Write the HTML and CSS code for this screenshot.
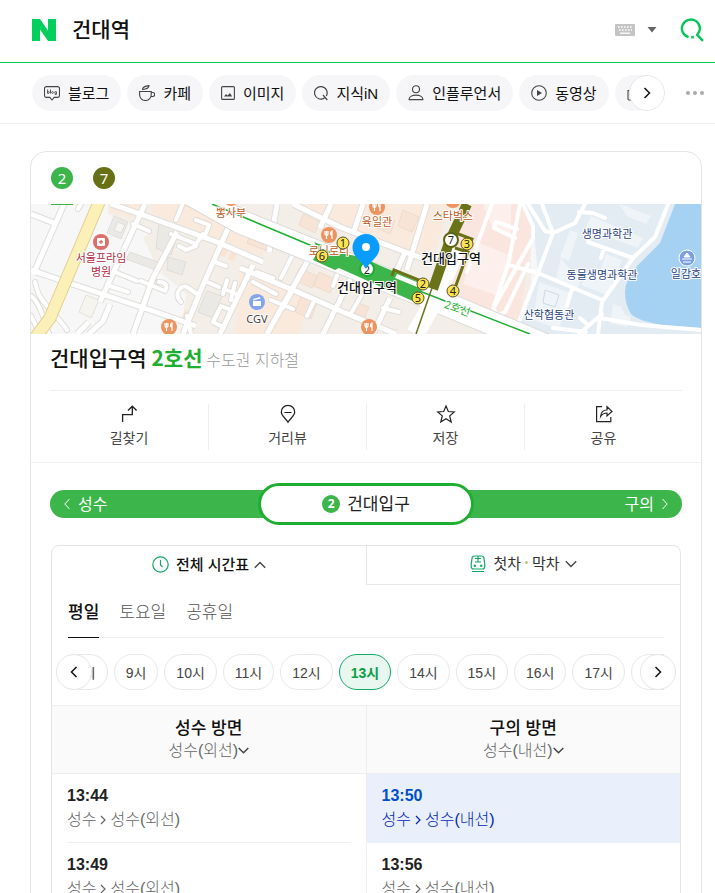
FILE: index.html
```html
<!DOCTYPE html>
<html lang="ko">
<head>
    <meta charset="UTF-8">
    <meta name="viewport" content="width=device-width, initial-scale=1.0">
    <title>건대역</title>
    <link rel="stylesheet" href="styles.css">
</head>
<body>
    <header class="header">
        <a class="logo" href="#" aria-label="홈">
            <svg width="24" height="22" viewBox="0 0 24 22"><path d="M0 0h8l8 11.500V0h8v22h-8L8 10.500V22H0z" fill="#03cf5d"/></svg>
        </a>
        <input class="search-input" type="text" value="건대역" aria-label="검색어">
        <button class="keyboard" aria-label="키보드">
            <svg width="20" height="12" viewBox="0 0 20 12">
                <rect width="20" height="12" rx="1" fill="#c4c4c4"/>
                <path d="M3 3h15M4 6h13" stroke="#fff" stroke-width="1.600" stroke-dasharray="1.600 1.400"/>
                <path d="M5 9.200h10" stroke="#fff" stroke-width="1.300"/>
            </svg>
        </button>
        <button class="history" aria-label="최근 검색어">
            <svg width="10" height="6" viewBox="0 0 10 6"><path d="M.5 0h9L5 5.500z" fill="#666"/></svg>
        </button>
        <button class="search" aria-label="검색">
            <svg width="24" height="24" viewBox="0 0 24 24" fill="none" stroke="#03c75a" stroke-width="2.400">
                <path d="M8.600 19.200A9 9 0 1 1 17.200 16.900L23 22.800"/>
                <path d="M11.200 19.200h2.600" stroke-width="2.600"/>
            </svg>
        </button>
    </header>

    <nav class="chips-bar">
        <div class="chips">
            <a class="chip" href="#">
                <svg width="16" height="16" viewBox="0 0 16 16" fill="none" stroke="#444" stroke-width="1.100">
                    <path d="M2.500 1.600h11a2 2 0 0 1 2 2v6.800a2 2 0 0 1-2 2h-3.300L8 15l-2.200-2.600H2.500a2 2 0 0 1-2-2V3.600a2 2 0 0 1 2-2z"/>
                    <path d="M3.600 4.500v4M6.500 4.500v4" stroke-width=".9"/>
                    <circle cx="4.500" cy="7.500" r=".9" stroke-width=".8"/><circle cx="8.500" cy="7.500" r=".9" stroke-width=".8"/>
                    <path d="M12.400 6.500v3h-1.700" stroke-width=".8"/><circle cx="11.500" cy="7.500" r=".9" stroke-width=".8"/>
                </svg>블로그</a>
            <a class="chip" href="#">
                <svg width="16" height="16" viewBox="0 0 16 16" fill="none" stroke="#444" stroke-width="1.100">
                    <path d="M.6 6.500h11.600v3.200a5.800 5.800 0 0 1-11.600 0zM12.200 7.500h1.500a1.700 1.700 0 0 1 0 4h-1.900M3.500 4.500C3.500 1.500 6 1 10 .6c0 2.600-2.600 3.700-6.500 3.900z"/>
                </svg>카페</a>
            <a class="chip" href="#">
                <svg width="14" height="16" viewBox="0 0 14 16" fill="none" stroke="#444" stroke-width="1.100">
                    <rect x=".6" y="1.600" width="12.800" height="12.800" rx="1"/>
                    <path d="M3 11.500l2-2.500 1.500 1.600L9 8l2.200 3.500z" fill="#444" stroke="none"/>
                </svg>이미지</a>
            <a class="chip" href="#">
                <svg width="14" height="16" viewBox="0 0 14 16" fill="none" stroke="#444" stroke-width="1.200">
                    <path d="M10.500 13A6.300 6.300 0 1 1 12.300 11M9 10l4.300 5"/>
                </svg>지식iN</a>
            <a class="chip" href="#">
                <svg width="16" height="16" viewBox="0 0 16 16" fill="none" stroke="#444" stroke-width="1.100">
                    <circle cx="8" cy="4.200" r="3.500"/>
                    <path d="M1 14.600c0-6 14-6 14 0z" stroke-linejoin="round"/>
                </svg>인플루언서</a>
            <a class="chip" href="#">
                <svg width="16" height="16" viewBox="0 0 16 16" fill="none" stroke="#444" stroke-width="1.100">
                    <circle cx="8" cy="8" r="7.300"/><path d="M6 5v6l5-3z" fill="#444" stroke="none"/>
                </svg>동영상</a>
            <a class="chip" href="#" aria-label="쇼핑">
                <svg width="16" height="16" viewBox="0 0 16 16" fill="none" stroke="#444" stroke-width="1.100">
                    <path d="M1 5.500h14l-1 8.500a1 1 0 0 1-1 1H2a1 1 0 0 1-1-1zM4 8V4a4 4 0 0 1 8 0v4"/>
                </svg>
            </a>
            <button class="chips-next" aria-label="다음">
                <svg width="8" height="12" viewBox="0 0 8 12" fill="none" stroke="#111" stroke-width="1.500"><path d="M1.500 1l5 5-5 5"/></svg>
            </button>
        </div>
        <button class="more" aria-label="더보기">
            <svg width="18" height="4" viewBox="0 0 18 4" fill="#aaa"><circle cx="2" cy="2" r="2"/><circle cx="9" cy="2" r="2"/><circle cx="16" cy="2" r="2"/></svg>
        </button>
    </nav>

    <main class="card">
        <div class="line-tabs">
            <a class="line-tab on" href="#"><span class="badge line2">2</span></a>
            <a class="line-tab" href="#"><span class="badge line7">7</span></a>
        </div>

        <svg class="map" viewBox="0 0 670 130" preserveAspectRatio="xMidYMid slice">
            <defs>
                <g id="roads" fill="none" stroke-linejoin="round">
                    <path class="road" d="M0 10L23 19M33 0L2 71M0 66L65 88L122 107L165 122M114 0L89 54L69 98M80 0L112 11L186 38L232 58M146 28L122 74L102 130M202 13L169 88L152 130M222 61L189 130M79 100L72 117L58 130M58 118L46 130"/>
                    <path class="road" d="M262 0L309 23L369 46L396 56M209 64L262 86L319 111L365 130M279 53L236 130M322 70L292 130M359 94L342 130M300 0L289 24M332 0L322 30M396 0L376 66M375 46L366 66M246 0L238 48"/>
                    <path class="road lane" d="M50 0L47 5M102 20L118 27M4 78C8 100 22 105 36 126M0 92C8 98 12 112 18 130M0 112L9 130M84 68L106 77M76 81L97 88M110 77L134 87C138 79 132 78 128 78M165 16L178 21L173 34M165 42L155 46L148 42M140 30L165 40L172 30M184 58L195 62M176 78L188 83M160 130L156 112M150 98C142 90 150 80 156 83L166 90M196 76L192 90M204 79L200 96M193 85L208 91M190 122L182 118L190 102L200 106L192 124M226 68L242 74M222 78L245 90M250 74L262 50M240 96L262 105M262 86L252 104M212 12L236 22M302 82L309 64M276 112L284 95M352 104L368 108M330 92L319 111M145 16L154 -6"/>
                </g>
                <g id="food">
                    <circle r="8" fill="#ee9460"/>
                    <path d="M-4-4v3a1.500 1.500 0 0 0 3 0v-3M-2.500-4v8M3 4v-8c-2 1-2 4 0 4" fill="none" stroke="#fff" stroke-width="1.200"/>
                </g>
            </defs>
            <rect width="670" height="130" fill="#f7f7f7"/>
            <path d="M77 0H500V130H150L155 90L128 67L112 34L120 27L77 10z" fill="#f3eee8"/>
            <path d="M80 0H112L106 14L78 8zM120 0H180L232 24V52L186 34L122 10zM262 0H420L400 56L330 28zM209 64L280 96L268 130H205z" fill="#fae9dd"/>
            <path d="M120 72L130 76L127 80L118 76zM191 44l6 2-3 7-6-2zM200 48l6 2-3 7-6-2zM154 106l8 3-6 14-8-3z" fill="#fbe3d2"/>
            <path d="M440 0H494L502 22L487 130L399 90L420 40z" fill="#fae5df"/>
            <path d="M452 0H480V30L462 26zM446 38L482 53L468 92L432 80z" fill="#fdf0ec"/>
            <g fill="#ebe9e5" stroke="#d9d7d3" stroke-width=".7">
                <path d="M83 12l14 6-7 17-14-6zM128 19l20 8-8 24-15-7zM99 48l28 10-2 8-30-11zM137 53l18 5-4 13-15-5zM176 87l15 5-9 22-15-6z"/>
                <path d="M87 18l7 3-4 8-7-3z" fill="#f6f5f3"/>
            </g>
            <path d="M55 91l13 5-8 18-12-6z" fill="#f6f4ef" stroke="#e5e1d8"/>
            <path d="M220 28l20 9-4 10-20-8zM268 64l18 8-5 12-18-8zM288 68l16 7-5 14-16-7zM270 92l16 7-6 16-16-7zM324 98l14 5-7 16-14-6zM344 8l20 9-5 13-20-9zM272 10l17 8-5 11-16-8zM372 6l16 7-7 15-14-6z" fill="#f7e4d6" stroke="#ead3c3" stroke-width=".6"/>

            <use class="road-edge" href="#roads"/>
            <use class="road-fill" href="#roads"/>
            <path d="M69-4L19 114L4 134" fill="none" stroke="#e3cf93" stroke-width="13"/>
            <path d="M69-4L19 114L4 134" fill="none" stroke="#fcf0b9" stroke-width="11"/>

            <path d="M494 0H670V130H500L487 120L507 69L503 30z" fill="#e3ebf3"/>
            <g fill="#eff4f9">
                <path d="M560 12L612 34L607 44L554 25zM539 26l8 3-9 28-9-4zM575 50l16 6-15 35-26-10 8-15 10 4zM530 54l8 10 14 7-6 15-22-8zM508 78l32 11-12 36-26-9zM582 100l8 3 4 8 6 2-4 10-17-4z"/>
                <path d="M588 0L620 12L615 20L596 12z"/>
            </g>
            <path d="M514 86l14 5-4 12-12-4z" fill="none" stroke="#cddae7"/>
            <path d="M644 0L629 39L607 61Q594 76 594 88T600 110Q607 117 631 121L670 124V0z" fill="#a5d2f3"/>
            <g fill="none" stroke="#fff" stroke-width="4" stroke-linejoin="round" stroke-linecap="round">
                <path d="M492 0L502 22V34L462 105L467 111L474 108L497 60M461 0L444 46L436 68M489 0L477 61L462 105M465 18L486 25M465 18L463 24L484 34"/>
                <path d="M497 0L514 27L522 29L507 69L487 120M511 0L522 29L544 19L554 0M548 8L562 9L574 14M638-2L624 33L602 54L571 98L567 130M557 38L602 54M573 44L570 54M477 61L507 69L571 96M541 85L536 102M569 114L610 121L670 126M571 110L548 130M522 124L555 128M549 114L556 120"/>
            </g>

            <!-- line 2 corridor -->
            <path d="M160-10L210 18L340 70L410 98L520 144" fill="none" stroke="#dcdad7" stroke-width="25"/>
            <path d="M160-10L210 18L340 70L410 98L520 144" fill="none" stroke="#fff" stroke-width="23"/>
            <path d="M425 45L405 94L384 130" fill="none" stroke="#fff" stroke-width="18"/>
            <path d="M181 0L286 44L391 88L499 130" fill="none" stroke="#1eaf32" stroke-width="1.500"/>
            <path d="M283 38L291 41L290 45L330 53L350 62L388 78L392 84L384 98L366 90L308 64L304 66L282 56L288 46z" fill="#3cb54a"/>
            <path d="M366 70L388 79L386 83L364 74z" fill="#fff"/>
            <!-- line 7 -->
            <g fill="none" stroke="#6a7318">
                <path d="M436 0L419 36L402 85" stroke-width="10"/>
                <path d="M401 84L385 130" stroke-width="1.500"/>
                <path d="M422 28L441 35L438 42M424 44L437 48L424 84M361 72L363 66L390 77" stroke-width="3"/>
            </g>

            <use href="#food" x="346" y="3"/>
            <use href="#food" x="422" y="-4"/>
            <use href="#food" x="200" y="-6"/>
            <use href="#food" x="298" y="31"/>
            <use href="#food" x="138" y="123"/>
            <use href="#food" x="338" y="123"/>
            <circle cx="70" cy="38" r="8" fill="#dd6f6a"/>
            <rect x="66" y="34" width="8" height="8" rx="1" fill="#fff"/>
            <path d="M70 36v4M68 38h4" stroke="#dd6f6a" stroke-width="1.300"/>
            <circle cx="226" cy="98" r="8" fill="#83a5f0"/>
            <path d="M222 97h8v5h-8zM222 95l7-2 .5 1.500-7 2z" fill="#fff"/>
            <circle cx="656" cy="54" r="8" fill="#7d9fe8" stroke="#fff"/>
            <path d="M651 55h10M652 58h8M653 53l3-4 3 4z" stroke="#fff" fill="#fff"/>

            <g class="poi food-name">
                <text x="200" y="13">뽕사부</text><text x="346" y="22">육일관</text>
                <text x="422" y="16">스타벅스</text><text x="298" y="51">로니로티</text>
            </g>
            <g class="poi hospital"><text x="70" y="58">서울프라임</text><text x="70" y="72">병원</text></g>
            <text class="poi cinema" x="226" y="119">CGV</text>
            <g class="poi campus">
                <text x="576" y="34">생명과학관</text><text x="571" y="75">동물생명과학관</text>
                <text x="518" y="115">산학협동관</text><text x="655" y="74">일감호</text>
            </g>
            <text class="poi line-name" transform="translate(425 108) rotate(20)">2호선</text>

            <circle cx="336" cy="65" r="7" fill="#fff" stroke="#1eaf32" stroke-width="2"/>
            <text class="exit-no" x="336" y="70">2</text>
            <path d="M335 65C331 57 321.500 53 321.500 43.500a13.500 13.500 0 0 1 27 0C348.500 53 339 57 335 65z" fill="#0a9bff"/>
            <circle cx="335" cy="43" r="4" fill="#fff"/>
            <circle cx="420" cy="36" r="7" fill="#fff" stroke="#5c6410" stroke-width="2"/>
            <text class="exit-no" x="420" y="40">7</text>
            <g class="poi station"><text x="336" y="88">건대입구역</text><text x="420" y="59">건대입구역</text></g>
            <g fill="#fbe44f" stroke="#55502a">
                <circle cx="312" cy="39" r="6"/><circle cx="291" cy="52" r="6"/><circle cx="392" cy="80" r="6"/>
                <circle cx="387" cy="94" r="6"/><circle cx="436" cy="40" r="6"/><circle cx="422" cy="87" r="6"/>
            </g>
            <g class="exit-no">
                <text x="312" y="43">1</text><text x="291" y="56">6</text><text x="392" y="84">2</text>
                <text x="387" y="98">5</text><text x="436" y="44">3</text><text x="422" y="91">4</text>
            </g>
        </svg>

        <h1 class="title">건대입구역 <strong>2호선</strong> <span>수도권 지하철</span></h1>

        <div class="actions">
            <a class="action" href="#">
                <svg width="20" height="20" viewBox="0 0 20 20" fill="none" stroke="#222" stroke-width="1.300"><path d="M3.600 18v-7.300h9.700V3M9 6.500l4.300-4.300 4.300 4.300"/></svg>
                길찾기</a>
            <a class="action" href="#">
                <svg width="20" height="20" viewBox="0 0 20 20" fill="none" stroke="#222" stroke-width="1.200"><path d="M10 18.300C8 14.500 3.300 12 3.300 8a6.700 6.700 0 0 1 13.400 0c0 4-4.700 6.500-6.700 10.300zM6.500 8.500h7"/></svg>
                거리뷰</a>
            <a class="action" href="#">
                <svg width="20" height="20" viewBox="0 0 20 20" fill="none" stroke="#222" stroke-width="1.200"><path d="M10 2l2.300 5.500 6 .5-4.600 3.900L15.200 18 10 14.700 4.800 18l1.500-6.100L1.700 8l6-.5z"/></svg>
                저장</a>
            <a class="action" href="#">
                <svg width="20" height="20" viewBox="0 0 20 20" fill="none" stroke="#222" stroke-width="1.200"><path d="M8 2.600H2.600v15h14.200V13M6.600 12.500C7 8 9.500 6 13 6V2.600l5 4.900-5 4.500V9c-3 0-4.600 1-6.400 3.500z"/></svg>
                공유</a>
        </div>

        <div class="route">
            <a class="route-side" href="#"><svg width="6" height="12" viewBox="0 0 6 12" fill="none" stroke="#fff"><path d="M5.500 1L.8 6l4.700 5"/></svg><span>성수</span></a>
            <div class="route-now"><b class="badge small line2">2</b><span>건대입구</span></div>
            <a class="route-side right" href="#"><span>구의</span><svg width="6" height="12" viewBox="0 0 6 12" fill="none" stroke="#fff"><path d="M.5 1l4.700 5L.5 11"/></svg></a>
        </div>

        <section class="timetable">
            <div class="view-tabs">
                <button class="view-tab on">
                    <svg width="17" height="17" viewBox="0 0 17 17" fill="none" stroke="#12a866" stroke-width="1.200"><circle cx="8.500" cy="8.500" r="7.700"/><path d="M8.500 4v5l2 2"/></svg>
                    <span>전체 시간표</span>
                    <svg class="arrow" width="12" height="8" viewBox="0 0 12 8" fill="none" stroke="#444" stroke-width="1.400"><path d="M.8 6.800L6 1.500l5.200 5.300"/></svg>
                </button>
                <button class="view-tab">
                    <svg width="16" height="18" viewBox="0 0 16 18" fill="none" stroke="#12a866" stroke-width="1.200">
                        <path d="M4.500 1h7a2.500 2.500 0 0 1 2.500 2.500l.8 6v2a2.500 2.500 0 0 1-2.500 2.500H3.700a2.500 2.500 0 0 1-2.500-2.500v-2l.8-6A2.500 2.500 0 0 1 4.500 1zM8 1v6M5 7h6M5 3.500h6M2 16.500h12"/>
                        <circle cx="4.800" cy="10.800" r=".6" fill="#12a866"/><circle cx="11.200" cy="10.800" r=".6" fill="#12a866"/>
                    </svg>
                    <span>첫차<i class="dot"></i>막차</span>
                    <svg class="arrow" width="12" height="8" viewBox="0 0 12 8" fill="none" stroke="#444" stroke-width="1.400"><path d="M.8 1.200L6 6.500l5.200-5.300"/></svg>
                </button>
            </div>
            <div class="days">
                <button class="day on">평일</button>
                <button class="day">토요일</button>
                <button class="day">공휴일</button>
            </div>
            <div class="hours">
                <div class="hours-list">
                    <button class="hour">8시</button>
                    <button class="hour">9시</button>
                    <button class="hour">10시</button>
                    <button class="hour">11시</button>
                    <button class="hour">12시</button>
                    <button class="hour on">13시</button>
                    <button class="hour">14시</button>
                    <button class="hour">15시</button>
                    <button class="hour">16시</button>
                    <button class="hour">17시</button>
                    <button class="hour" aria-label="18시"></button>
                </div>
                <button class="hours-nav prev" aria-label="이전">
                    <svg width="8" height="12" viewBox="0 0 8 12" fill="none" stroke="#111" stroke-width="1.500"><path d="M6.500 1l-5 5 5 5"/></svg>
                </button>
                <button class="hours-nav next" aria-label="다음">
                    <svg width="8" height="12" viewBox="0 0 8 12" fill="none" stroke="#111" stroke-width="1.500"><path d="M1.500 1l5 5-5 5"/></svg>
                </button>
            </div>
            <table>
                <thead>
                    <tr>
                        <th>성수 방면<button class="filter">성수(외선)<svg width="11" height="7" viewBox="0 0 11 7" fill="none" stroke="#444" stroke-width="1.500"><path d="M.7 1l4.800 4.800L10.300 1"/></svg></button></th>
                        <th>구의 방면<button class="filter">성수(내선)<svg width="11" height="7" viewBox="0 0 11 7" fill="none" stroke="#444" stroke-width="1.500"><path d="M.7 1l4.800 4.800L10.300 1"/></svg></button></th>
                    </tr>
                </thead>
                <tbody>
                    <tr>
                        <td><div class="train"><b>13:44</b><span>성수<svg width="6" height="10" viewBox="0 0 6 10" fill="none" stroke="currentColor" stroke-width="1.200"><path d="M1 1l4 4-4 4"/></svg>성수(외선)</span></div></td>
                        <td class="next-train"><div class="train"><b>13:50</b><span>성수<svg width="6" height="10" viewBox="0 0 6 10" fill="none" stroke="currentColor" stroke-width="1.200"><path d="M1 1l4 4-4 4"/></svg>성수(내선)</span></div></td>
                    </tr>
                    <tr>
                        <td><div class="train"><b>13:49</b><span>성수<svg width="6" height="10" viewBox="0 0 6 10" fill="none" stroke="currentColor" stroke-width="1.200"><path d="M1 1l4 4-4 4"/></svg>성수(외선)</span></div></td>
                        <td><div class="train"><b>13:56</b><span>성수<svg width="6" height="10" viewBox="0 0 6 10" fill="none" stroke="currentColor" stroke-width="1.200"><path d="M1 1l4 4-4 4"/></svg>성수(내선)</span></div></td>
                    </tr>
                </tbody>
            </table>
        </section>
    </main>
</body>
</html>
```
FILE: styles.css
```css
* {
    box-sizing: border-box;
}
body {
    margin: 0;
    background: #fff;
    color: #111;
    font-family: "Liberation Sans", "Noto Sans CJK KR", sans-serif;
    font-size: 15px;
}
a {
    color: inherit;
    text-decoration: none;
}
button {
    padding: 0;
    border: none;
    background: none;
    color: inherit;
    font: inherit;
    cursor: pointer;
}
svg {
    display: block;
    flex: none;
}

/* header */
.header {
    display: flex;
    align-items: center;
    height: 63px;
    padding: 0 11px 2px 32px;
    border-bottom: 1px solid #03c75a;
}
.search-input {
    flex: 1;
    min-width: 0;
    margin-left: 16px;
    padding: 0;
    border: none;
    outline: none;
    color: #111;
    font: 500 21px/30px "Liberation Sans", "Noto Sans CJK KR", sans-serif;
}
.history {
    margin-left: 12px;
}
.search {
    margin-left: 23px;
}

/* category chips */
.chips-bar {
    display: flex;
    align-items: center;
    justify-content: space-between;
    height: 61px;
    padding: 0 11px 1px 32px;
    border-bottom: 1px solid #eee;
}
.chips {
    position: relative;
    display: flex;
    flex: 1;
    gap: 6px;
    min-width: 0;
    margin-right: 21px;
    overflow: hidden;
    border-radius: 18px;
}
.chip {
    display: flex;
    flex: none;
    align-items: center;
    gap: 8px;
    height: 36px;
    padding: 0 12px;
    border-radius: 18px;
    background: #f6f6f9;
    white-space: nowrap;
}
.chips-next,
.hours-nav {
    position: absolute;
    top: 0;
    display: flex;
    align-items: center;
    justify-content: center;
    width: 36px;
    height: 36px;
    border: 1px solid #e6e6e6;
    border-radius: 50%;
    background: #fff;
}
.chips-next {
    right: 0;
}

/* place card */
.card {
    margin: 27px 13px 0 30px;
    border: 1px solid #e5e5e5;
    border-radius: 16px;
}
.line-tabs {
    position: relative;
    display: flex;
    gap: 20px;
    height: 53px;
    margin: 0 20px -1px;
}
.line-tab {
    padding-top: 15px;
}
.line-tab.on {
    border-bottom: 1px solid #3cb54a;
}
.badge {
    display: flex;
    align-items: center;
    justify-content: center;
    width: 22px;
    height: 22px;
    border-radius: 50%;
    color: #fff;
    font: 15px/22px "Noto Sans", sans-serif;
}
.badge.small {
    width: 18px;
    height: 18px;
    font: bold 12px/18px "Noto Sans", sans-serif;
}
.line2 {
    background: #3cb54a;
}
.line7 {
    background: #677014;
}

/* map */
.map {
    width: 100%;
    height: 130px;
}
.road {
    stroke-width: calc(5px + var(--edge));
}
.lane {
    stroke-width: calc(4px + var(--edge));
    stroke-linecap: round;
}
.road-edge {
    --edge: 2px;
    stroke: #e0deda;
}
.road-fill {
    --edge: 0px;
    stroke: #fff;
}
.poi {
    font: 11px "Noto Sans", "Noto Sans CJK KR", sans-serif;
    text-anchor: middle;
    paint-order: stroke;
    stroke: #fff;
    stroke-width: 2px;
    stroke-linejoin: round;
}
.food-name {
    fill: #bd5c1e;
}
.hospital {
    fill: #b32a40;
}
.cinema {
    fill: #444;
}
.campus {
    fill: #2a457f;
}
.line-name {
    fill: #1eaf32;
}
.station {
    fill: #111;
    font-size: 13px;
    font-weight: 500;
}
.exit-no {
    fill: #222;
    font: 11px "Noto Sans", sans-serif;
    text-anchor: middle;
}

/* title */
.title {
    margin: 0 19px;
    padding: 8px 0 14px;
    border-bottom: 1px solid #f0f0f0;
    font-size: 21px;
    font-weight: 500;
    line-height: 30px;
}
.title strong {
    margin-left: -1px;
    color: #1eaf32;
    font-family: "Noto Sans CJK KR", sans-serif;
    font-weight: bold;
}
.title span {
    margin-left: -2px;
    color: #999;
    font-size: 16px;
    font-weight: 300;
}
.actions {
    display: grid;
    grid-template-columns: repeat(4, 1fr);
    padding: 13px 19px 12px;
    border-bottom: 1px solid #f0f0f0;
}
.action {
    display: flex;
    flex-direction: column;
    align-items: center;
    gap: 3px;
    height: 46px;
    color: #444;
    font-size: 14px;
    line-height: 22px;
}
.action + .action {
    border-left: 1px solid #eee;
}

/* route */
.route {
    display: flex;
    align-items: center;
    height: 28px;
    margin: 27px 19px;
    border-radius: 14px;
    background: #3cb54a;
    color: #fff;
    font-size: 16px;
}
.route span,
.view-tab span {
    padding-bottom: 3px;
}
.route-side {
    display: flex;
    flex: 1;
    align-items: center;
    gap: 8px;
    padding: 0 14px;
}
.route-side.right {
    justify-content: flex-end;
}
.route-now {
    display: flex;
    flex: none;
    align-items: center;
    justify-content: center;
    gap: 7px;
    width: 216px;
    height: 42px;
    border: 3px solid #1eaf32;
    border-radius: 21px;
    background: #fff;
    color: #222;
    font-size: 17px;
}

/* timetable */
.timetable {
    margin: 0 20px 20px;
    border: 1px solid #e5e5e5;
    border-radius: 8px;
}
.view-tabs {
    display: grid;
    grid-template-columns: 1fr 1fr;
}
.view-tab {
    display: flex;
    align-items: center;
    justify-content: center;
    gap: 7px;
    height: 39px;
    padding-bottom: 2px;
    color: #333;
}
.view-tab.on {
    color: #111;
    font-weight: 500;
}
.view-tab:not(.on) {
    border: solid #e8e8e8;
    border-width: 0 0 1px 1px;
}
.view-tab .arrow {
    margin-left: -2px;
}
.dot {
    display: inline-block;
    width: 3px;
    height: 3px;
    margin: 0 4px 5px;
    border-radius: 50%;
    background: #c5c87a;
}
.days {
    display: flex;
    gap: 20px;
    height: 53px;
    margin: 0 16px;
    border-bottom: 1px solid #eee;
    color: #555;
    font-size: 17px;
    font-weight: 300;
}
.day {
    height: 53px;
    padding-bottom: 2px;
}
.day.on {
    border-bottom: 1px solid #111;
    color: #111;
    font-weight: 500;
}
.hours {
    position: relative;
    margin: 0 4px;
    padding: 16px 12px 15px 7px;
}
.hours-list {
    display: flex;
    gap: 6px;
    overflow: hidden;
}
.hour {
    flex: none;
    height: 36px;
    padding: 0 11px;
    border: 1px solid #e8e8e8;
    border-radius: 18px;
    color: #444;
    font-size: 14px;
}
.hour:last-child {
    width: 53px;
}
.hour.on {
    border-color: #12a866;
    background: #e8f7ef;
    color: #0aa045;
    font-weight: bold;
}
.hours-nav {
    top: 16px;
}
.hours-nav.prev {
    left: 0;
}
.hours-nav.next {
    right: 0;
}
table {
    width: 100%;
    border-collapse: collapse;
    table-layout: fixed;
}
th {
    height: 68px;
    padding: 0;
    border: solid #eee;
    border-width: 1px 0;
    background: #fafafa;
    font-size: 17px;
    font-weight: 500;
    line-height: 22px;
}
th + th,
td + td {
    border-left: 1px solid #eee;
}
.filter {
    display: flex;
    align-items: center;
    margin: 0 auto;
    color: #666;
    font-size: 16px;
    font-weight: 300;
}
td {
    padding: 0 15px;
}
.train {
    padding: 10px 0;
    border-bottom: 1px solid #eee;
}
.train b {
    display: block;
    color: #222;
    font-size: 16px;
    line-height: 24px;
}
.train span {
    display: flex;
    align-items: center;
    gap: 4px;
    color: #666;
    font-size: 16px;
    font-weight: 300;
    line-height: 24px;
}
.next-train {
    background: #e9effb;
}
.next-train .train {
    border-color: transparent;
}
.next-train b {
    color: #0050c8;
}
.next-train span {
    color: #0028b4;
}
```
